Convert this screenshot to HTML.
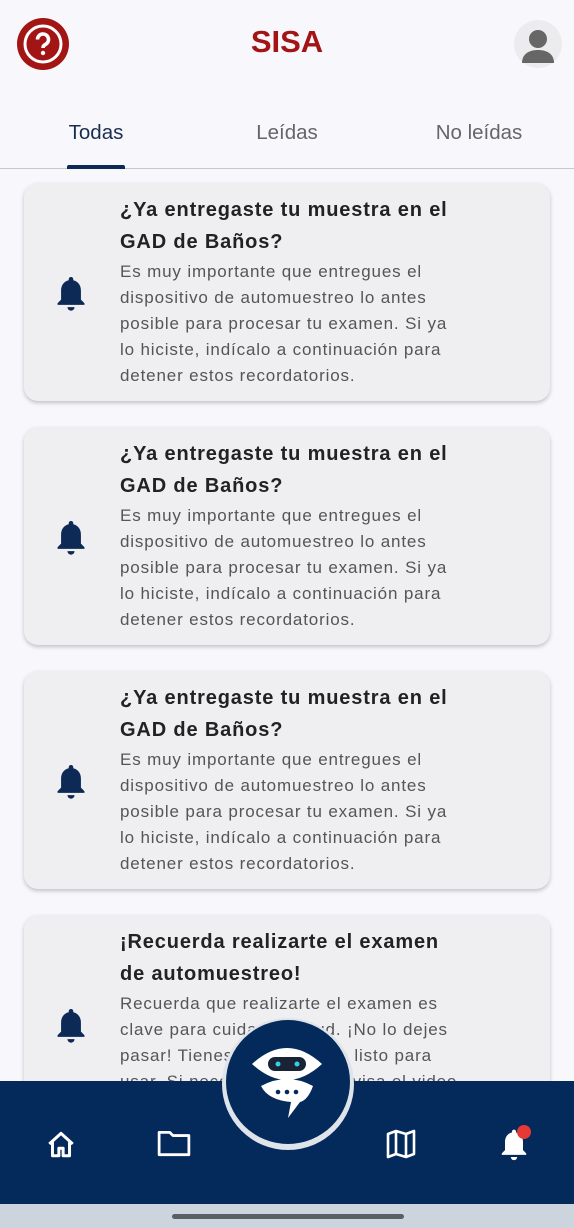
<!DOCTYPE html>
<html><head><meta charset="utf-8"><style>
*{margin:0;padding:0;box-sizing:border-box}
body{width:574px;height:1228px;background:#f8f8fc;font-family:"Liberation Sans",sans-serif;position:relative;overflow:hidden}
.abs{position:absolute}
.card{position:absolute;left:24px;width:526px;height:218px;background:#efeff1;border-radius:14px;box-shadow:0 2px 4px rgba(0,0,0,.22)}
.card .t{position:absolute;left:96px;top:11px;font-size:20px;font-weight:bold;line-height:32px;color:#222;white-space:nowrap;letter-spacing:.85px}
.card .b{position:absolute;left:96px;top:76px;font-size:17px;line-height:26px;color:#555;white-space:nowrap;letter-spacing:.85px}
.card svg{position:absolute;left:30px;top:91px}
.tab{position:absolute;top:121px;font-size:20.5px;color:#666;transform:translateX(-50%)}
</style></head><body>
<svg class="abs" style="left:16px;top:17px" width="54" height="54" viewBox="0 0 54 54"><circle cx="27" cy="27" r="26" fill="#a31515"/><circle cx="27" cy="27" r="18" fill="none" stroke="#fff" stroke-width="3"/><path d="M21.5 22.5a5.5 5.5 0 1 1 7.8 5c-1.5.8-2.3 1.7-2.3 3.5" fill="none" stroke="#fff" stroke-width="3.6"/><circle cx="27" cy="36" r="2.2" fill="#fff"/></svg>
<div class="abs" style="left:0;width:574px;top:24px;text-align:center;font-size:31px;font-weight:bold;color:#a31515">SISA</div>
<svg class="abs" style="left:514px;top:20px" width="48" height="48" viewBox="0 0 48 48"><circle cx="24" cy="24" r="24" fill="#ececee"/><circle cx="24" cy="19" r="9" fill="#666"/><path d="M8 43c0-9 7-13 16-13s16 4 16 13z" fill="#666"/></svg>
<div class="tab" style="left:96px;color:#1a2e50">Todas</div>
<div class="tab" style="left:287px">Leídas</div>
<div class="tab" style="left:479px">No leídas</div>
<div class="abs" style="left:0;top:168px;width:574px;height:1px;background:#c8c8cc"></div>
<div class="abs" style="left:67px;top:165px;width:58px;height:4px;border-radius:2px 2px 0 0;background:#0c2a55"></div>

<div class="card" style="top:183px"><svg width="34" height="40" viewBox="0 0 24 28"><path d="M12 2c-1 0-1.6.7-1.6 1.6v.7C7 5 5 8 5 11.5V18l-2.5 2.5v1.2h19v-1.2L19 18v-6.5C19 8 17 5 13.6 4.3v-.7C13.6 2.7 13 2 12 2z" fill="#0c2a55"/><path d="M9.5 23.3h5a2.5 2.5 0 0 1-5 0z" fill="#0c2a55"/></svg><div class="t">¿Ya entregaste tu muestra en el<br>GAD de Baños?</div><div class="b">Es muy importante que entregues el<br>dispositivo de automuestreo lo antes<br>posible para procesar tu examen. Si ya<br>lo hiciste, indícalo a continuación para<br>detener estos recordatorios.</div></div>
<div class="card" style="top:427px"><svg width="34" height="40" viewBox="0 0 24 28"><path d="M12 2c-1 0-1.6.7-1.6 1.6v.7C7 5 5 8 5 11.5V18l-2.5 2.5v1.2h19v-1.2L19 18v-6.5C19 8 17 5 13.6 4.3v-.7C13.6 2.7 13 2 12 2z" fill="#0c2a55"/><path d="M9.5 23.3h5a2.5 2.5 0 0 1-5 0z" fill="#0c2a55"/></svg><div class="t">¿Ya entregaste tu muestra en el<br>GAD de Baños?</div><div class="b">Es muy importante que entregues el<br>dispositivo de automuestreo lo antes<br>posible para procesar tu examen. Si ya<br>lo hiciste, indícalo a continuación para<br>detener estos recordatorios.</div></div>
<div class="card" style="top:671px"><svg width="34" height="40" viewBox="0 0 24 28"><path d="M12 2c-1 0-1.6.7-1.6 1.6v.7C7 5 5 8 5 11.5V18l-2.5 2.5v1.2h19v-1.2L19 18v-6.5C19 8 17 5 13.6 4.3v-.7C13.6 2.7 13 2 12 2z" fill="#0c2a55"/><path d="M9.5 23.3h5a2.5 2.5 0 0 1-5 0z" fill="#0c2a55"/></svg><div class="t">¿Ya entregaste tu muestra en el<br>GAD de Baños?</div><div class="b">Es muy importante que entregues el<br>dispositivo de automuestreo lo antes<br>posible para procesar tu examen. Si ya<br>lo hiciste, indícalo a continuación para<br>detener estos recordatorios.</div></div>
<div class="card" style="top:915px"><svg width="34" height="40" viewBox="0 0 24 28"><path d="M12 2c-1 0-1.6.7-1.6 1.6v.7C7 5 5 8 5 11.5V18l-2.5 2.5v1.2h19v-1.2L19 18v-6.5C19 8 17 5 13.6 4.3v-.7C13.6 2.7 13 2 12 2z" fill="#0c2a55"/><path d="M9.5 23.3h5a2.5 2.5 0 0 1-5 0z" fill="#0c2a55"/></svg><div class="t">¡Recuerda realizarte el examen<br>de automuestreo!</div><div class="b">Recuerda que realizarte el examen es<br>clave para cuidar tu salud. ¡No lo dejes<br>pasar! Tienes tu dispositivo listo para<br>usar. Si necesitas ayuda, revisa el video</div></div>

<div class="abs" style="left:0;top:1081px;width:574px;height:123px;background:#032a5a"></div>
<div class="abs" style="left:0;top:1204px;width:574px;height:24px;background:#ccd5de"></div>
<div class="abs" style="left:172px;top:1214px;width:232px;height:5px;border-radius:3px;background:#5a5f66"></div>
<div class="abs" style="left:222px;top:1018px;width:132px;height:132px;border-radius:50%;background:#dfe4ea"></div>
<div class="abs" style="left:226px;top:1020px;width:124px;height:124px;border-radius:50%;background:#032a5a"></div>
<svg class="abs" style="left:248px;top:1042px" width="78" height="80" viewBox="0 0 78 80"><path d="M4 22Q39 -10 74 22Q39 54 4 22z" fill="#fff"/><rect x="20" y="15" width="38" height="14" rx="7" fill="#1a2235"/><circle cx="30" cy="22" r="2.5" fill="#2dd4e0"/><circle cx="49" cy="22" r="2.5" fill="#2dd4e0"/><path d="M13 44Q39 30 65 44Q60 58 52 60L40 76L43 60Q20 58 13 44z" fill="#fff"/><circle cx="30" cy="50" r="2.3" fill="#032a5a"/><circle cx="39" cy="50" r="2.3" fill="#032a5a"/><circle cx="48" cy="50" r="2.3" fill="#032a5a"/></svg>
<svg class="abs" style="left:45px;top:1129px" width="32" height="30" viewBox="0 0 30 28"><path d="M4 14L15 4l11 10M7 11v14h6v-7h4v7h6V11" fill="none" stroke="#fff" stroke-width="2.8" stroke-linejoin="round"/></svg>
<svg class="abs" style="left:157px;top:1129px" width="34" height="28" viewBox="0 0 32 26"><path d="M2 3h10l3 3h15v18H2z" fill="none" stroke="#fff" stroke-width="2.6" stroke-linejoin="round"/></svg>
<svg class="abs" style="left:386px;top:1128px" width="30" height="32" viewBox="0 0 30 30"><path d="M2 5l8-3 10 3 8-3v23l-8 3-10-3-8 3zM10 2v23M20 5v23" fill="none" stroke="#fff" stroke-width="2.6" stroke-linejoin="round"/></svg>
<svg class="abs" style="left:498px;top:1127px" width="32" height="36" viewBox="0 0 24 28"><path d="M12 2c-1 0-1.6.7-1.6 1.6v.7C7 5 5 8 5 11.5V18l-2.5 2.5v1.2h19v-1.2L19 18v-6.5C19 8 17 5 13.6 4.3v-.7C13.6 2.7 13 2 12 2z" fill="#fff"/><path d="M9.5 23.3h5a2.5 2.5 0 0 1-5 0z" fill="#fff"/></svg>
<div class="abs" style="left:517px;top:1125px;width:14px;height:14px;border-radius:50%;background:#e53935"></div>
</body></html>
